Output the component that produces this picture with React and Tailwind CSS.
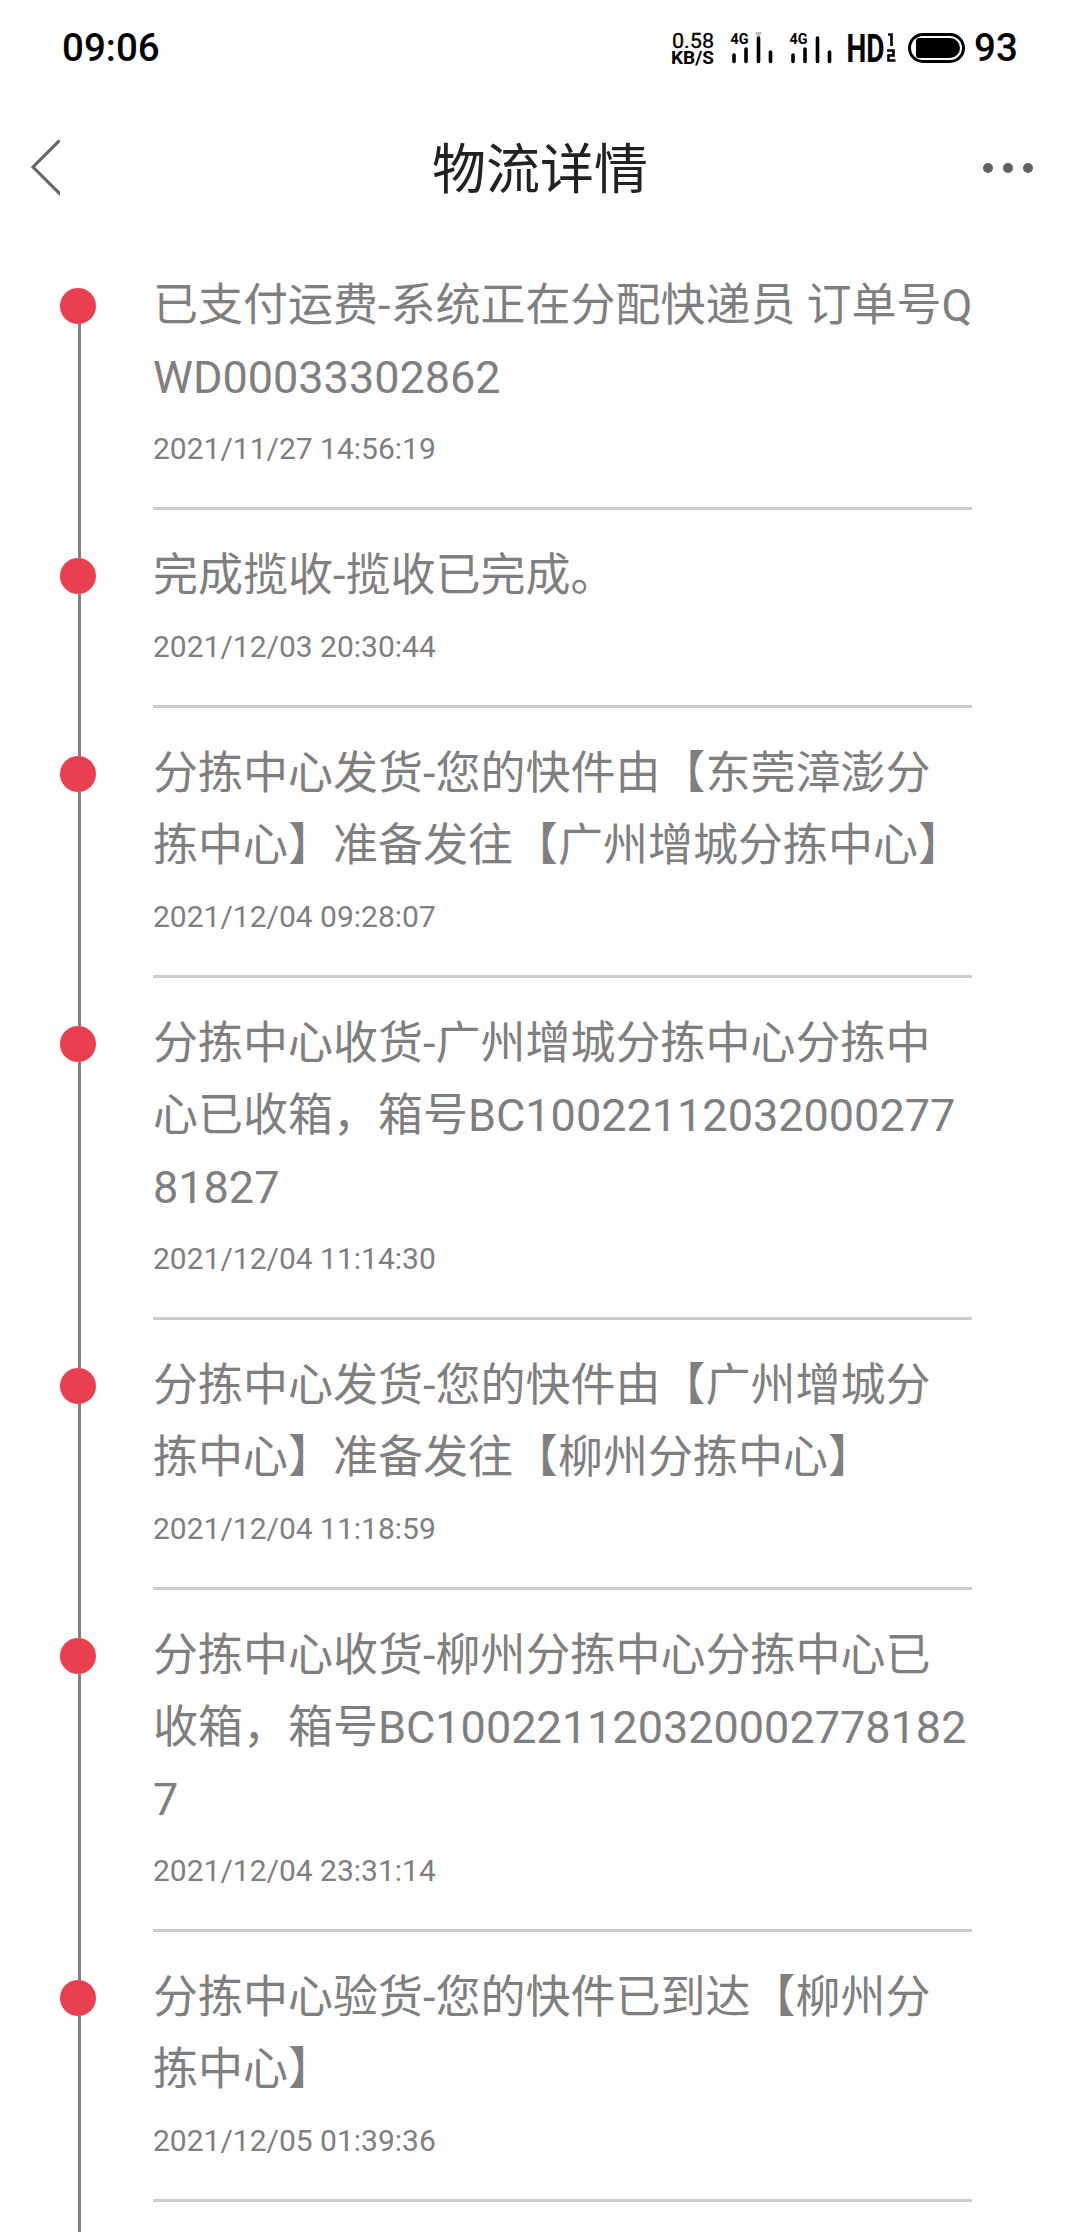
const events = [
  { lines: ['已支付运费-系统正在分配快递员 订单号Q', 'WD00033302862'], time: '2021/11/27 14:56:19' },
  { lines: ['完成揽收-揽收已完成。'], time: '2021/12/03 20:30:44' },
  { lines: ['分拣中心发货-您的快件由【东莞漳澎分', '拣中心】准备发往【广州增城分拣中心】'], time: '2021/12/04 09:28:07' },
  { lines: ['分拣中心收货-广州增城分拣中心分拣中', '心已收箱，箱号BC10022112032000277', '81827'], time: '2021/12/04 11:14:30' },
  { lines: ['分拣中心发货-您的快件由【广州增城分', '拣中心】准备发往【柳州分拣中心】'], time: '2021/12/04 11:18:59' },
  { lines: ['分拣中心收货-柳州分拣中心分拣中心已', '收箱，箱号BC100221120320002778182', '7'], time: '2021/12/04 23:31:14' },
  { lines: ['分拣中心验货-您的快件已到达【柳州分', '拣中心】'], time: '2021/12/05 01:39:36' },
];

function Signal({ tip }) {
  return (
    <svg width="44" height="36" viewBox="0 0 44 36" fill="none" className="overflow-visible">
      <text x="0.5" y="13.5" fontSize="15" fontWeight="700" fill="#000" textLength="18" lengthAdjust="spacingAndGlyphs">4G</text>
      {tip && <path d="M25 2h7l-2 4h-3z" fill="#bdbdbd" />}
      <path d="M4 25v6.500M16 19v12.500M28.500 8v23.500M40.500 22v9.500" stroke="#000" strokeWidth="3.6" strokeLinecap="round" />
    </svg>
  );
}

function StatusBar() {
  return (
    <div className="flex h-24 items-center justify-between pl-[62px] pr-[62px] text-black">
      <span className="text-[38.5px] leading-none font-medium">09:06</span>
      <div className="flex items-center">
        <svg width="44" height="36" viewBox="0 0 44 36" className="mr-[15px] overflow-visible">
          <text x="1" y="17.5" fontSize="21" textLength="42" lengthAdjust="spacingAndGlyphs" stroke="#000" strokeWidth="0.3">0.58</text>
          <text x="0" y="34" fontSize="17.5" fontWeight="700" textLength="43" lengthAdjust="spacingAndGlyphs">KB/S</text>
        </svg>
        <Signal tip />
        <span className="w-[15px]" />
        <Signal />
        <svg width="52" height="36" viewBox="0 0 52 36" className="ml-[13px] overflow-visible">
          <text x="0.5" y="32" fontSize="39" fontWeight="700" textLength="38" lengthAdjust="spacingAndGlyphs">HD</text>
          <path d="M42 4.500h3.500v11.500M41 20.500h6.500v5h-5v5h7" fill="none" stroke="#000" strokeWidth="2.6" />
        </svg>
        <svg width="57" height="30" viewBox="0 0 57 30" className="ml-[10px]">
          <rect x="1.5" y="1.500" width="54" height="27" rx="13.500" fill="none" stroke="#000" strokeWidth="3" />
          <path d="M11 5h31a10 10 0 0 1 0 20H11a3 3 0 0 1-3-3V8a3 3 0 0 1 3-3z" fill="#000" />
        </svg>
        <span className="ml-[9px] w-11 text-[38.5px] leading-none font-medium">93</span>
      </div>
    </div>
  );
}

function Header() {
  return (
    <header className="grid h-36 grid-cols-3 items-center px-[30px]">
      <svg width="30" height="56" viewBox="0 0 30 56" fill="none">
        <path d="M33 -3L3 27l30 30" stroke="#666" strokeWidth="3.1" />
      </svg>
      <h1 className="pt-[5px] text-center text-[54px] leading-none text-[#222]">物流详情</h1>
      <div className="flex gap-[9.500px] justify-self-end pr-[17px]">
        <i className="size-[10.500px] rounded-full bg-[#62625c]" />
        <i className="size-[10.500px] rounded-full bg-[#62625c]" />
        <i className="size-[10.500px] rounded-full bg-[#62625c]" />
      </div>
    </header>
  );
}

function Event({ lines, time, first }) {
  return (
    <li className="flex pl-[60px]">
      <div className="flex w-9 shrink-0 flex-col items-center">
        <span className={first ? 'ml-[3px] h-12 w-[3px]' : 'ml-[3px] h-12 w-[3px] bg-[#808080]'} />
        <span className="size-9 rounded-full bg-[#e84050]" />
        <span className="ml-[3px] w-[3px] grow bg-[#808080]" />
      </div>
      <div className="ml-[57px] w-[819px] border-b-3 border-[#ccc] pt-[30px] pb-[23px] whitespace-nowrap text-[#7f7f7f]">
        {lines.map((line) => (
          <p key={line} className="h-18 text-[45px] leading-[72px]">{line}</p>
        ))}
        <time className="block h-[70px] text-[30px] leading-[70px]">{time}</time>
      </div>
    </li>
  );
}

export default function App() {
  return (
    <div lang="zh-CN" className="h-[2232px] w-[1080px] overflow-hidden bg-[#fefefe] font-['Roboto','Noto_Sans_CJK_SC',sans-serif]">
      <StatusBar />
      <Header />
      <ol>
        {events.map((event, i) => (
          <Event key={event.time} {...event} first={i === 0} />
        ))}
        <li className="flex h-[60px] pl-[78px]">
          <span className="w-[3px] bg-[#808080]" />
        </li>
      </ol>
    </div>
  );
}
